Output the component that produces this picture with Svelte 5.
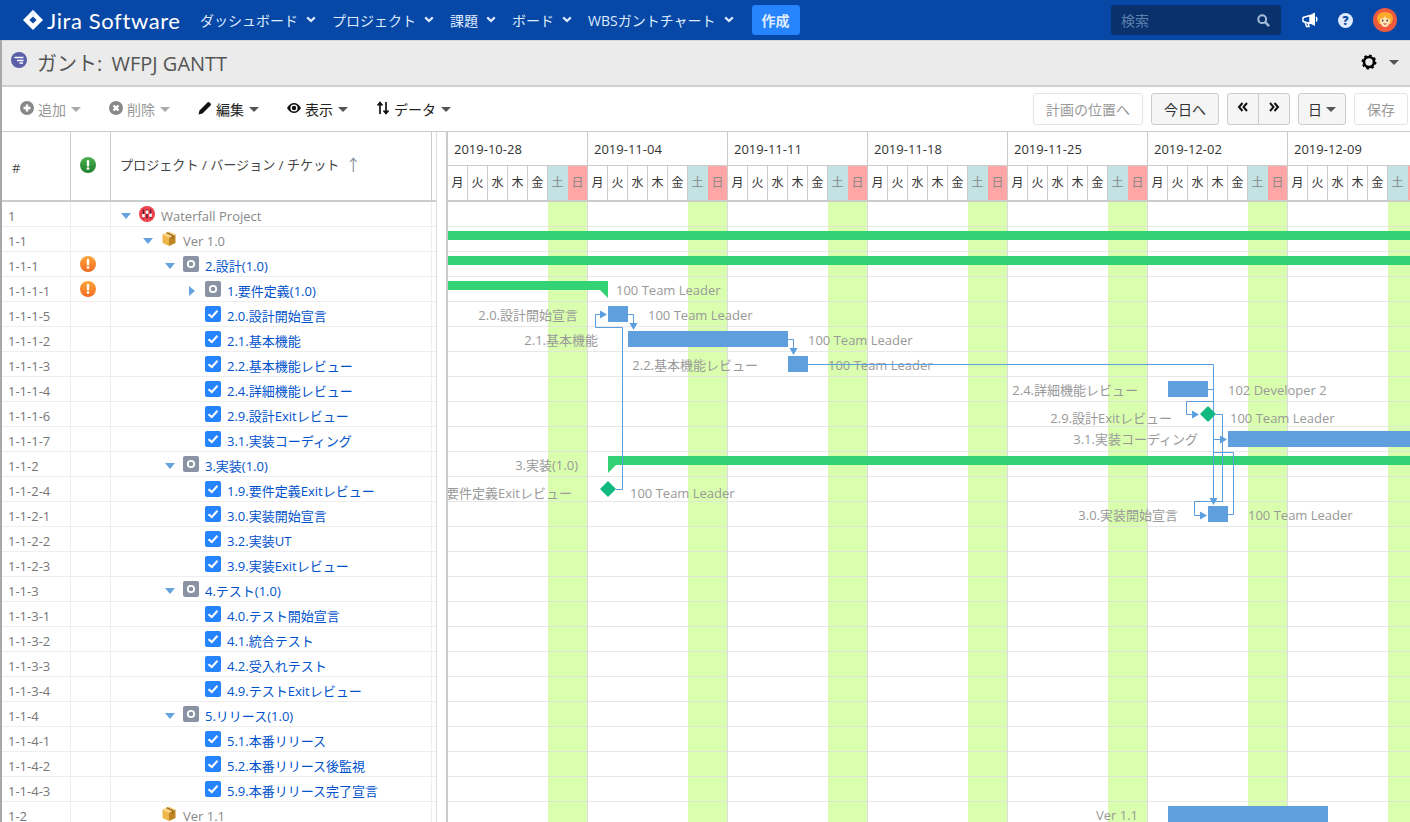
<script>
	const OX = 448;
	const OY = 202;
	const navItems = ['ダッシュボード', 'プロジェクト', '課題', 'ボード', 'WBSガントチャート'];
	const weeks = ['2019-10-28', '2019-11-04', '2019-11-11', '2019-11-18', '2019-11-25', '2019-12-02', '2019-12-09'];
	const days = ['月', '火', '水', '木', '金', '土', '日'];

	// kind: p project, v version, g group, t task
	const rows = [
		{ id: '1', depth: 0, kind: 'p', open: 'down', name: 'Waterfall Project' },
		{ id: '1-1', depth: 1, kind: 'v', open: 'down', name: 'Ver 1.0' },
		{ id: '1-1-1', depth: 2, kind: 'g', open: 'down', name: '2.設計(1.0)', warn: true },
		{ id: '1-1-1-1', depth: 3, kind: 'g', open: 'right', name: '1.要件定義(1.0)', warn: true },
		{ id: '1-1-1-5', depth: 3, kind: 't', name: '2.0.設計開始宣言' },
		{ id: '1-1-1-2', depth: 3, kind: 't', name: '2.1.基本機能' },
		{ id: '1-1-1-3', depth: 3, kind: 't', name: '2.2.基本機能レビュー' },
		{ id: '1-1-1-4', depth: 3, kind: 't', name: '2.4.詳細機能レビュー' },
		{ id: '1-1-1-6', depth: 3, kind: 't', name: '2.9.設計Exitレビュー' },
		{ id: '1-1-1-7', depth: 3, kind: 't', name: '3.1.実装コーディング' },
		{ id: '1-1-2', depth: 2, kind: 'g', open: 'down', name: '3.実装(1.0)' },
		{ id: '1-1-2-4', depth: 3, kind: 't', name: '1.9.要件定義Exitレビュー' },
		{ id: '1-1-2-1', depth: 3, kind: 't', name: '3.0.実装開始宣言' },
		{ id: '1-1-2-2', depth: 3, kind: 't', name: '3.2.実装UT' },
		{ id: '1-1-2-3', depth: 3, kind: 't', name: '3.9.実装Exitレビュー' },
		{ id: '1-1-3', depth: 2, kind: 'g', open: 'down', name: '4.テスト(1.0)' },
		{ id: '1-1-3-1', depth: 3, kind: 't', name: '4.0.テスト開始宣言' },
		{ id: '1-1-3-2', depth: 3, kind: 't', name: '4.1.統合テスト' },
		{ id: '1-1-3-3', depth: 3, kind: 't', name: '4.2.受入れテスト' },
		{ id: '1-1-3-4', depth: 3, kind: 't', name: '4.9.テストExitレビュー' },
		{ id: '1-1-4', depth: 2, kind: 'g', open: 'down', name: '5.リリース(1.0)' },
		{ id: '1-1-4-1', depth: 3, kind: 't', name: '5.1.本番リリース' },
		{ id: '1-1-4-2', depth: 3, kind: 't', name: '5.2.本番リリース後監視' },
		{ id: '1-1-4-3', depth: 3, kind: 't', name: '5.9.本番リリース完了宣言' },
		{ id: '1-2', depth: 1, kind: 'v', name: 'Ver 1.1' }
	];

	const greenBars = [
		{ x: 448, y: 231, w: 962 },
		{ x: 448, y: 256, w: 962 },
		{ x: 448, y: 281, w: 160 },
		{ x: 608, y: 456, w: 802 }
	];
	const blueBars = [
		{ x: 608, y: 306, w: 20 },
		{ x: 628, y: 331, w: 160 },
		{ x: 788, y: 356, w: 20 },
		{ x: 1168, y: 381, w: 40 },
		{ x: 1228, y: 431, w: 182 },
		{ x: 1208, y: 506, w: 20 },
		{ x: 1168, y: 806, w: 160 }
	];
	const rightLabels = [
		{ x: 616, y: 290, t: '100 Team Leader' },
		{ x: 648, y: 315, t: '100 Team Leader' },
		{ x: 808, y: 340, t: '100 Team Leader' },
		{ x: 828, y: 365, t: '100 Team Leader' },
		{ x: 1228, y: 390, t: '102 Developer 2' },
		{ x: 1230, y: 418, t: '100 Team Leader' },
		{ x: 630, y: 493, t: '100 Team Leader' },
		{ x: 1248, y: 515, t: '100 Team Leader' }
	];
	const leftLabels = [
		{ x: 578, y: 315, t: '2.0.設計開始宣言' },
		{ x: 598, y: 340, t: '2.1.基本機能' },
		{ x: 758, y: 365, t: '2.2.基本機能レビュー' },
		{ x: 1138, y: 390, t: '2.4.詳細機能レビュー' },
		{ x: 1172, y: 418, t: '2.9.設計Exitレビュー' },
		{ x: 1198, y: 439, t: '3.1.実装コーディング' },
		{ x: 578, y: 465, t: '3.実装(1.0)' },
		{ x: 572, y: 493, t: '1.9.要件定義Exitレビュー' },
		{ x: 1178, y: 515, t: '3.0.実装開始宣言' },
		{ x: 1138, y: 815, t: 'Ver 1.1' }
	];
	const links = [
		'M628 314.5H633.5V324',
		'M788 339.5H793.5V349',
		'M808 364.5H1213.5V499',
		'M1208 389.5H1213.5',
		'M1213.5 401.5H1186.5V414.5H1193',
		'M1216 414.5H1222.5V501.5H1194.5V515.5H1201',
		'M1228 514.5H1233.5V452.5H1213.5V439.5H1221',
		'M616 489.5H622.5V327.5H595.5V314.5H601'
	];
	const arrows = [
		'629.5,323 637.5,323 633.5,330',
		'789.5,348 797.5,348 793.5,355',
		'1209.5,498 1217.5,498 1213.5,505',
		'1192,410.5 1199,414.5 1192,418.5',
		'1200,511.5 1207,515.5 1200,519.5',
		'1220,435.5 1227,439.5 1220,443.5',
		'600,310.5 607,314.5 600,318.5'
	];
</script>

{#snippet caret(cls)}
	<span class="caret {cls}"></span>
{/snippet}

{#snippet warnIcon(c1, c2)}
	<svg class="alert" viewBox="0 0 16 16" width="16" height="16">
		<defs>
			<linearGradient id="g{c1.slice(1)}" x1="0" y1="0" x2="0" y2="1">
				<stop offset="0" stop-color={c1} />
				<stop offset="1" stop-color={c2} />
			</linearGradient>
		</defs>
		<circle cx="8" cy="8" r="8" fill="url(#g{c1.slice(1)})" />
		<rect x="6.8" y="3" width="2.4" height="6.4" rx="1" fill="#fff" />
		<circle cx="8" cy="11.6" r="1.4" fill="#fff" />
	</svg>
{/snippet}

<div class="app">
	<header class="topbar">
		<div class="logo">
			<svg viewBox="0 0 20 20" width="20" height="20">
				<path d="M10 0L20 10L10 20L0 10Z" fill="#fff" />
				<path d="M10 6.4L13.6 10L10 13.6L6.4 10Z" fill="#0747a6" />
				<path d="M10 0L13.6 3.6L10 7L6.4 3.6Z" fill="#deebff" opacity="0.7" />
			</svg>
			<span>Jira Software</span>
		</div>
		<nav class="nav">
			{#each navItems as item}
				<span class="nav-item">
					{item}
					<svg class="chev" viewBox="0 0 10 7" width="10" height="7"><path d="M1.2 1.4L5 5L8.8 1.4" fill="none" stroke="#deebff" stroke-width="2.2" /></svg>
				</span>
			{/each}
		</nav>
		<button class="create">作成</button>
		<div class="top-right">
			<div class="search">
				<span>検索</span>
				<svg viewBox="0 0 14 14" width="13" height="13"><circle cx="5.6" cy="5.6" r="4.2" fill="none" stroke="#a5bad6" stroke-width="2.2" /><path d="M8.8 8.8L13 13" stroke="#a5bad6" stroke-width="2.6" /></svg>
			</div>
			<svg class="mega" viewBox="0 0 16 16" width="16" height="16">
				<path d="M1 5.5L8 3.500V11.500L1 9.500Z" fill="none" stroke="#fff" stroke-width="1.5" stroke-linejoin="round" />
				<path d="M3 10L4.500 14.500H7L6 10.500" fill="none" stroke="#fff" stroke-width="1.4" />
				<path d="M8 3L13 0.500V14L8 11.500Z" fill="#fff" />
				<path d="M14 5Q15.800 7.200 14 9.500" fill="none" stroke="#fff" stroke-width="1.400" />
			</svg>
			<span class="help">?</span>
			<svg class="avatar" viewBox="0 0 24 24" width="24" height="24">
				<circle cx="12" cy="12" r="12" fill="#ef5a3f" />
				<path d="M4 11Q4 4 12 4Q20 4 20 11L18 16H6Z" fill="#fcaa2c" />
				<path d="M7 11Q10 11 12 8.5Q14 11 17 11V14Q15.5 19 12 19Q8.500 19 7 14Z" fill="#ffe3b8" />
				<circle cx="9.700" cy="12.500" r="0.900" fill="#5a3a20" />
				<circle cx="14.300" cy="12.500" r="0.900" fill="#5a3a20" />
				<path d="M10 15.500H14L12 17Z" fill="#c0452f" />
			</svg>
		</div>
	</header>

	<div class="page">
		<div class="subheader">
			<svg viewBox="0 0 16 16" width="16" height="16">
				<circle cx="8" cy="8" r="8" fill="#5a5fa8" />
				<path d="M3.500 5.500H12.500M6 8.500H12.500M8.500 11H12" stroke="#fff" stroke-width="1.500" />
			</svg>
			<h1>ガント: <span class="title-name">WFPJ GANTT</span></h1>
			<div class="settings">
				<svg viewBox="0 0 16 16" width="16" height="16">
					<circle cx="8" cy="8" r="5" fill="none" stroke="#000" stroke-width="2.600" />
					<circle cx="8" cy="8" r="6.700" fill="none" stroke="#000" stroke-width="1.600" stroke-dasharray="2.600 2.660" />
				</svg>
				{@render caret('dark')}
			</div>
		</div>

		<div class="toolbar">
			<span class="tool off">
				<svg viewBox="0 0 14 14" width="14" height="14"><circle cx="7" cy="7" r="7" fill="#888" /><path d="M7 3.500V10.500M3.500 7H10.500" stroke="#fff" stroke-width="2.400" /></svg>
				<span>追加</span>{@render caret('light')}
			</span>
			<span class="tool off">
				<svg viewBox="0 0 14 14" width="14" height="14"><circle cx="7" cy="7" r="7" fill="#888" /><path d="M4.500 4.500L9.500 9.500M9.500 4.500L4.500 9.500" stroke="#fff" stroke-width="2.400" /></svg>
				<span>削除</span>{@render caret('light')}
			</span>
			<span class="tool">
				<svg viewBox="0 0 14 14" width="14" height="14"><path d="M0.500 13.500L1.500 9.500L9.500 1.500Q10.500 0.500 11.500 1.500L12.500 2.500Q13.500 3.500 12.500 4.500L4.500 12.500Z" fill="#111" /></svg>
				<span>編集</span>{@render caret('dark')}
			</span>
			<span class="tool">
				<svg viewBox="0 0 14 14" width="14" height="14"><path d="M0 7Q3 2 7 2Q11 2 14 7Q11 12 7 12Q3 12 0 7Z" fill="#111" /><circle cx="7" cy="7" r="3.600" fill="#fff" /><circle cx="7" cy="7" r="2.200" fill="#111" /></svg>
				<span>表示</span>{@render caret('dark')}
			</span>
			<span class="tool">
				<svg viewBox="0 0 14 14" width="14" height="14"><path d="M4 13V2M1.500 4.500L4 1.500L6.500 4.500M10 1V12M7.500 9.500L10 12.500L12.500 9.500" fill="none" stroke="#111" stroke-width="1.700" /></svg>
				<span>データ</span>{@render caret('dark')}
			</span>
			<div class="actions">
				<button class="btn dim">計画の位置へ</button>
				<button class="btn">今日へ</button>
				<div class="btn-group">
					<button class="btn sym" aria-label="previous">
						<svg viewBox="0 0 12 10" width="12" height="10"><path d="M5.500 1L2 5L5.500 9M10 1L6.500 5L10 9" fill="none" stroke="#111" stroke-width="2" /></svg>
					</button>
					<button class="btn sym" aria-label="next">
						<svg viewBox="0 0 12 10" width="12" height="10"><path d="M2 1L5.500 5L2 9M6.500 1L10 5L6.500 9" fill="none" stroke="#111" stroke-width="2" /></svg>
					</button>
				</div>
				<button class="btn scale">日{@render caret('dark')}</button>
				<button class="btn dim">保存</button>
			</div>
		</div>

		<div class="workspace">
			<section class="table">
				<div class="thead">
					<div class="th num">#</div>
					<div class="th status">{@render warnIcon('#4cb04c', '#1f7f2f')}</div>
					<div class="th title">プロジェクト / バージョン / チケット <span class="sort">↑</span></div>
				</div>
				{#each rows as row}
					<div class="tr">
						<div class="td num">{row.id}</div>
						<div class="td status">
							{#if row.warn}{@render warnIcon('#ffa640', '#f06a1c')}{/if}
						</div>
						<div class="td tree" style="padding-left: {10 + row.depth * 22}px">
							<span class="toggle">
								{#if row.open}<span class="tri {row.open}"></span>{/if}
							</span>
							<span class="icon" class:box={row.kind === 'v'}>
								{#if row.kind === 'p'}
									<svg viewBox="0 0 16 16" width="16" height="16">
										<circle cx="8" cy="8" r="8" fill="#f0434f" />
										<path d="M4.500 3.500V12.500M8 3.500V12.500M11.500 3.500V12.500" stroke="#4a2030" stroke-width="1.400" />
										<rect x="3.200" y="8" width="2.600" height="3.400" rx="0.800" fill="#fff" />
										<rect x="6.700" y="4.500" width="2.600" height="3.400" rx="0.800" fill="#fff" />
										<rect x="10.200" y="7.500" width="2.600" height="3.400" rx="0.800" fill="#fff" />
									</svg>
								{:else if row.kind === 'v'}
									<svg viewBox="0 0 14 15" width="14" height="15">
										<path d="M0.500 3.500L7 6.500V15L0.500 12Z" fill="#eeb54a" />
										<path d="M7 6.500L13.500 3.500V12L7 15Z" fill="#bf8626" />
										<path d="M0.500 3.500L7 0.500L13.500 3.500L7 6.500Z" fill="#f8d27e" />
										<path d="M4 2L10 5V8L11.500 7V4.300L5.500 1.300Z" fill="#96661c" />
									</svg>
								{:else if row.kind === 'g'}
									<svg viewBox="0 0 16 16" width="16" height="16">
										<rect width="16" height="16" rx="2" fill="#8993a4" />
										<circle cx="8" cy="8" r="3.200" fill="none" stroke="#fff" stroke-width="1.800" />
									</svg>
								{:else}
									<svg viewBox="0 0 16 16" width="16" height="16">
										<rect width="16" height="16" rx="2" fill="#2684ff" />
										<path d="M3.500 8.200L6.800 11L12.500 4.800" fill="none" stroke="#fff" stroke-width="2" />
									</svg>
								{/if}
							</span>
							<span class={row.kind === 'p' || row.kind === 'v' ? 'plain' : 'link'}>{row.name}</span>
						</div>
						<div class="td tail"></div>
					</div>
				{/each}
			</section>

			<section class="gantt">
				<div class="weeks">
					{#each weeks as w}
						<div class="week">
							<div class="date">{w}</div>
							<div class="days">
								{#each days as d, i}
									<span class="day" class:sat={i === 5} class:sun={i === 6}>{d}</span>
								{/each}
							</div>
						</div>
					{/each}
				</div>
				<div class="chart">
					{#each rows as _}
						<div class="grid-row"></div>
					{/each}
					{#each leftLabels as l}
						<span class="label left" style="right: {1410 - l.x}px; top: {l.y - OY - 10}px">{l.t}</span>
					{/each}
					{#each rightLabels as l}
						<span class="label" style="left: {l.x - OX}px; top: {l.y - OY - 10}px">{l.t}</span>
					{/each}
					{#each greenBars as b}
						<div class="bar green" style="left: {b.x - OX}px; top: {b.y - OY}px; width: {b.w}px"></div>
					{/each}
					{#each blueBars as b}
						<div class="bar blue" style="left: {b.x - OX}px; top: {b.y - OY}px; width: {b.w}px"></div>
					{/each}
					<svg class="links" viewBox="448 202 962 620" width="962" height="620">
						<path d="M600 290H608V298Z" fill="#33d375" />
						<path d="M608 465H616L608 473Z" fill="#33d375" />
						{#each links as d}
							<path {d} fill="none" stroke="#5b9fdf" stroke-width="1" />
						{/each}
						{#each arrows as points}
							<polygon {points} fill="#5b9fdf" />
						{/each}
						<path d="M1208 406L1216 414L1208 422L1200 414Z" fill="#10b981" />
						<path d="M608 481L616 489L608 497L600 489Z" fill="#10b981" />
					</svg>
				</div>
			</section>
		</div>
	</div>
</div>

<style>
	:global(body) {
		margin: 0;
		overflow: hidden;
	}

	.app {
		width: 1410px;
		height: 822px;
		overflow: hidden;
		background: #fff;
		font-family: 'Open Sans', 'Noto Sans CJK JP', sans-serif;
		font-size: 13px;
		color: #333;
	}

	button {
		font-family: inherit;
		cursor: pointer;
	}

	/* top navigation */
	.topbar {
		display: flex;
		align-items: center;
		height: 40px;
		background: #0747a6;
		color: #deebff;
	}

	.logo {
		display: flex;
		align-items: center;
		gap: 4px;
		margin-left: 23px;
		width: 177px;
		color: #fff;
		font-family: 'Lato', sans-serif;
		font-size: 22px;
		letter-spacing: 0.6px;
	}

	.nav {
		display: flex;
		gap: 16px;
	}

	.nav-item {
		display: flex;
		align-items: center;
		gap: 8px;
		font-size: 14px;
	}

	.chev {
		margin-top: -2px;
	}

	.create {
		margin-left: 18px;
		width: 48px;
		height: 30px;
		padding: 0;
		border: none;
		border-radius: 3px;
		background: #2684ff;
		color: #deebff;
		font-size: 14px;
		font-weight: 700;
	}

	.top-right {
		display: flex;
		align-items: center;
		margin-left: auto;
		padding-right: 13px;
	}

	.search {
		display: flex;
		align-items: center;
		justify-content: space-between;
		box-sizing: border-box;
		width: 170px;
		height: 30px;
		padding: 0 11px 0 10px;
		border-radius: 3px;
		background: #09326c;
		color: #5d7fad;
		font-size: 14px;
	}

	.mega {
		margin-left: 21px;
	}

	.help {
		display: flex;
		align-items: center;
		justify-content: center;
		width: 15px;
		height: 15px;
		margin-left: 20px;
		border-radius: 50%;
		background: #deebff;
		color: #0747a6;
		font-size: 12px;
		font-weight: 800;
	}

	.avatar {
		margin-left: 20px;
	}

	/* page */
	.page {
		height: 782px;
		border-left: 2px solid #a8a8a8;
		box-sizing: border-box;
	}

	.subheader {
		display: flex;
		align-items: center;
		box-sizing: border-box;
		height: 47px;
		padding: 0 11px 2px 9px;
		background: #ebebeb;
		border-top: 1px solid #d6d6d6;
		border-bottom: 2px solid #d0d0d0;
	}

	.subheader svg {
		margin-top: -4px;
	}

	h1 {
		margin: 0 0 0 10px;
		font-size: 20px;
		font-weight: 400;
		color: #555;
	}

	.title-name {
		margin-left: 4px;
	}

	.settings {
		display: flex;
		align-items: center;
		gap: 12px;
		margin-left: auto;
	}

	.settings svg {
		margin-top: 0;
	}

	.caret {
		display: inline-block;
		width: 0;
		height: 0;
		border-left: 5px solid transparent;
		border-right: 5px solid transparent;
		border-top: 5px solid #555;
	}

	.caret.light {
		border-top-color: #aaa;
	}

	/* toolbar */
	.toolbar {
		display: flex;
		align-items: center;
		box-sizing: border-box;
		height: 45px;
		padding-left: 18px;
		border-bottom: 1px solid #ccc;
	}

	.tool {
		display: flex;
		align-items: center;
		gap: 4px;
		margin-right: 28px;
		font-size: 14px;
		color: #222;
	}

	.tool .caret {
		margin-left: 1px;
	}

	.tool.off {
		color: #999;
	}

	.tool svg {
		margin-top: -2px;
	}

	.actions {
		display: flex;
		gap: 8px;
		margin-left: auto;
		padding-right: 2px;
	}

	.btn {
		display: flex;
		align-items: center;
		justify-content: center;
		gap: 4px;
		box-sizing: border-box;
		height: 32px;
		padding: 0 12px;
		border: 1px solid #ccc;
		border-radius: 3px;
		background: #f5f5f5;
		font-size: 14px;
		color: #333;
	}

	.btn.dim {
		background: #fff;
		border-color: #e4e4e4;
		color: #999;
	}

	.btn.scale {
		width: 48px;
		padding: 0;
	}

	.btn-group {
		display: flex;
	}

	.btn.sym {
		width: 32px;
		padding: 0 0 4px;
	}

	.btn.sym:first-child {
		border-radius: 3px 0 0 3px;
	}

	.btn.sym:last-child {
		margin-left: -1px;
		border-radius: 0 3px 3px 0;
	}

	/* layout of table + chart */
	.workspace {
		display: flex;
		height: 690px;
		overflow: hidden;
	}

	.table {
		flex: none;
		width: 434px;
		border-right: 1px solid #ddd;
		box-sizing: content-box;
		margin-right: 9px;
	}

	.thead {
		display: grid;
		grid-template-columns: 69px 40px 321px 4px;
		height: 70px;
		box-sizing: border-box;
		border-bottom: 2px solid #ccc;
	}

	.th {
		display: flex;
		align-items: center;
		box-sizing: border-box;
		height: 68px;
		border-right: 1px solid #ccc;
		padding-top: 1px;
	}

	.th.num {
		padding-left: 10px;
		padding-top: 3px;
		color: #555;
	}

	.th.status {
		justify-content: center;
		padding: 0 5px 3px 0;
	}

	.th.title {
		padding-left: 9px;
		padding-top: 0;
		padding-bottom: 4px;
		font-size: 13.1px;
		color: #444;
	}

	.sort {
		margin-left: 6px;
		font-size: 16px;
		color: #8a949e;
	}

	.tr {
		display: grid;
		grid-template-columns: 69px 40px 321px 4px;
		box-sizing: border-box;
		height: 25px;
		border-bottom: 1px solid #eee;
	}

	.td {
		box-sizing: border-box;
		height: 24px;
		border-right: 1px solid #eee;
	}

	.td.num {
		padding: 4px 0 0 6px;
		line-height: 20px;
		color: #777;
	}

	.td.status {
		display: flex;
		justify-content: center;
		padding: 4px 5px 0 0;
	}

	.td.tail {
		border-right: none;
	}

	.tree {
		display: flex;
		align-items: flex-start;
	}

	.toggle {
		flex: none;
		width: 18px;
		height: 24px;
	}

	.tri {
		display: block;
		width: 0;
		height: 0;
		margin-top: 11px;
	}

	.tri.down {
		border-left: 5.5px solid transparent;
		border-right: 5.5px solid transparent;
		border-top: 6px solid #64a3df;
	}

	.tri.right {
		margin: 9px 0 0 2px;
		border-top: 5.5px solid transparent;
		border-bottom: 5.5px solid transparent;
		border-left: 6px solid #64a3df;
	}

	.icon {
		flex: none;
		width: 22px;
		padding-top: 4px;
		line-height: 0;
	}

	.icon.box {
		box-sizing: border-box;
		padding-left: 1px;
	}

	.plain,
	.link {
		padding-top: 4px;
		line-height: 20px;
		white-space: nowrap;
	}

	.plain {
		color: #888;
	}

	.link {
		color: #0052cc;
	}

	/* gantt */
	.gantt {
		flex: none;
		width: 964px;
		border-left: 2px solid #ccc;
		box-sizing: border-box;
		overflow: hidden;
	}

	.weeks {
		display: flex;
		width: 980px;
		height: 70px;
		box-sizing: border-box;
		border-bottom: 2px solid #ccc;
	}

	.week {
		flex: none;
		width: 140px;
	}

	.date {
		box-sizing: border-box;
		height: 34px;
		padding: 6px 0 0 6px;
		line-height: 22px;
		border-right: 1px solid #ccc;
		border-bottom: 1px solid #ccc;
	}

	.days {
		display: flex;
		height: 34px;
	}

	.day {
		flex: none;
		box-sizing: border-box;
		width: 20px;
		line-height: 33px;
		text-align: center;
		font-size: 12px;
		border-right: 1px solid #ccc;
	}

	.day.sat {
		background: #c2e2e4;
		border-right-color: #c2e2e4;
		color: #888;
	}

	.day.sun {
		background: #ffa6a6;
		color: #888;
	}

	.chart {
		position: relative;
		width: 962px;
		height: 620px;
		overflow: hidden;
		background-image: repeating-linear-gradient(
			to right,
			transparent 0,
			transparent 100px,
			#d9ffae 100px,
			#d9ffae 139px,
			#ddd 139px,
			#ddd 140px
		);
	}

	.grid-row {
		box-sizing: border-box;
		height: 25px;
		border-bottom: 1px solid rgba(225, 225, 225, 0.8);
	}

	.label {
		position: absolute;
		line-height: 20px;
		white-space: nowrap;
		color: #999;
	}

	.bar {
		position: absolute;
	}

	.bar.green {
		height: 9px;
		background: #33d375;
	}

	.bar.blue {
		height: 16px;
		background: #5f9fdd;
	}

	.links {
		position: absolute;
		left: 0;
		top: 0;
	}
</style>
